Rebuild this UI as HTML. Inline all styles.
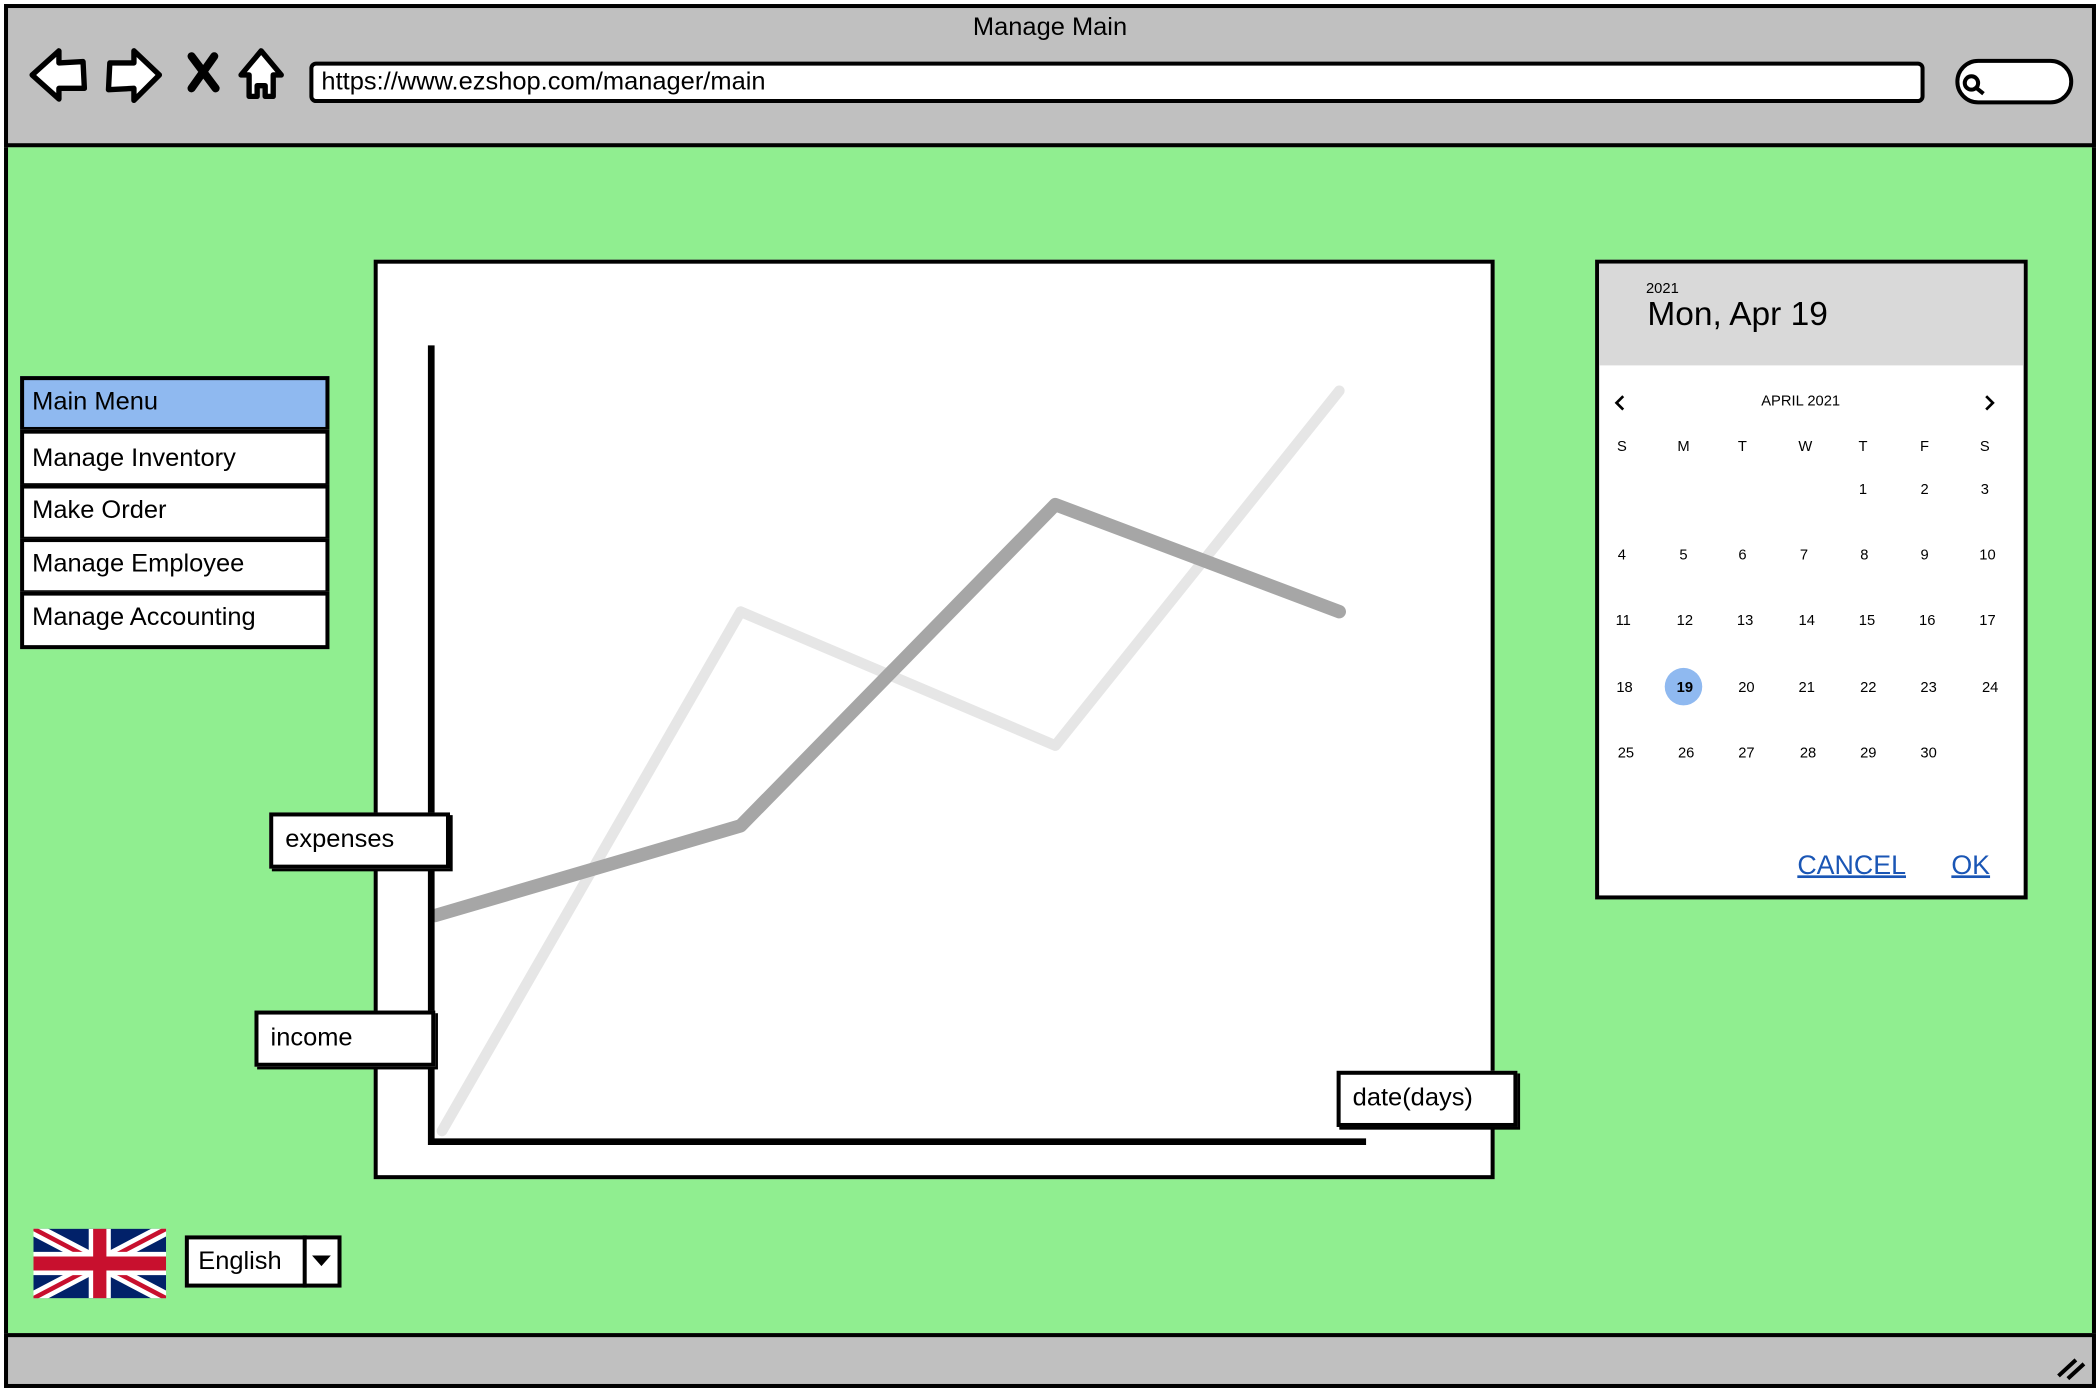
<!DOCTYPE html>
<html><head><style>
html,body{margin:0;padding:0;background:#fff;overflow:hidden}
body{width:2100px;height:1392px;position:relative}
#s{position:absolute;left:0;top:0;width:1568px;height:1040px;transform-origin:0 0;transform:scale(1.33929,1.33846);font-family:"Liberation Sans",sans-serif;color:#000}
.a{position:absolute;box-sizing:border-box}
.box{background:#fff;border:3px solid #000}
.mi{position:absolute;left:15px;width:231px;box-sizing:border-box;border:3px solid #000;background:#fff;font-size:19px;padding-left:6px;line-height:34px}
.lbl{position:absolute;box-sizing:border-box;border:3px solid #000;background:#fff;font-size:19px;padding-left:9px;line-height:35px;box-shadow:2px 2px 0 #000}
.cal span{position:absolute;font-size:11px;transform:translateX(-50%)}
</style></head><body><div id="s">
<div class="a" style="left:3px;top:3px;width:1562px;height:1034px;border:3px solid #000;background:#90ee90"></div>
<div class="a" style="left:3px;top:3px;width:1562px;height:107px;border:3px solid #000;background:#c0c0c0"></div>
<div class="a" style="left:3px;top:996px;width:1562px;height:41px;border:3px solid #000;background:#c0c0c0"></div>
<div class="a" style="left:0;top:10px;width:1568px;text-align:center;font-size:19px">Manage Main</div>
<svg class="a" style="left:0;top:0" width="260" height="110">
<path d="M24 56 L44 38 L44 47 L62 46 L63 66 L44 66 L44 74 Z" fill="#fff" stroke="#000" stroke-width="4" stroke-linejoin="round"/>
<path d="M119 56 L100 38 L100 47 L82 47 L81 67 L100 66 L100 75 Z" fill="#fff" stroke="#000" stroke-width="4" stroke-linejoin="round"/>
<path d="M143 42 L161 66 M160 42 L143 66" stroke="#000" stroke-width="6" stroke-linecap="round"/>
<path d="M195 38 L180 56 L186 56 L186 72 L192 72 L192 64 L198 64 L198 72 L204 72 L204 56 L210 56 Z" fill="#fff" stroke="#000" stroke-width="4" stroke-linejoin="round"/>
</svg>
<div class="a box" style="left:231px;top:46px;width:1206px;height:31px;border-radius:5px;font-size:19px;padding-left:6px;line-height:25px">https://www.ezshop.com/manager/main</div>
<div class="a box" style="left:1460px;top:44px;width:88px;height:34px;border-radius:17px"></div>
<svg class="a" style="left:1462px;top:52px" width="24" height="24"><circle cx="10" cy="10" r="5" fill="none" stroke="#000" stroke-width="3"/><path d="M14 14 L19 18" stroke="#000" stroke-width="3"/></svg>
<svg class="a" style="left:1532px;top:1008px" width="30" height="25"><path d="M5 20 L18 8 M12 22 L24 11" stroke="#000" stroke-width="3"/></svg>

<div class="a box" style="left:279px;top:194px;width:837px;height:687px"></div>
<svg class="a" style="left:0;top:0" width="1568" height="1040">
<polyline points="330,845 553,457 788,557 1000,292" fill="none" stroke="#e6e6e6" stroke-width="8" stroke-linecap="round" stroke-linejoin="round"/>
<polyline points="325,684 553,617 788,377 1000,457" fill="none" stroke="#a6a6a6" stroke-width="10" stroke-linecap="round" stroke-linejoin="round"/>
<path d="M322 258 L322 853 L1020 853" fill="none" stroke="#000" stroke-width="5"/>
</svg>
<div class="lbl" style="left:201px;top:607px;width:135px;height:42px">expenses</div>
<div class="lbl" style="left:190px;top:755px;width:135px;height:42px">income</div>
<div class="lbl" style="left:998px;top:800px;width:135px;height:42px">date(days)</div>

<div class="mi" style="top:281px;height:41px;background:#8fb9f0">Main Menu</div>
<div class="mi" style="top:321px;height:43px;line-height:38px">Manage Inventory</div>
<div class="mi" style="top:362px;height:42px">Make Order</div>
<div class="mi" style="top:402px;height:42px">Manage Employee</div>
<div class="mi" style="top:442px;height:43px">Manage Accounting</div>

<div class="a box cal" style="left:1191px;top:194px;width:323px;height:478px">
<div class="a" style="left:0;top:0;width:317px;height:76px;background:#d9d9d9"></div>
<div class="a" style="left:35px;top:13px;font-size:11px">2021</div>
<div class="a" style="left:36px;top:24px;font-size:25px">Mon, Apr 19</div>
<div class="a" style="left:-8px;top:97px;width:317px;text-align:center;font-size:11px">APRIL 2021</div>
<svg class="a" style="left:10px;top:97px" width="12" height="14"><path d="M8 2 L3 7 L8 12" fill="none" stroke="#000" stroke-width="2"/></svg>
<svg class="a" style="left:285px;top:97px" width="12" height="14"><path d="M4 2 L9 7 L4 12" fill="none" stroke="#000" stroke-width="2"/></svg>
<div class="a" style="left:49px;top:302px;width:28px;height:28px;border-radius:14px;background:#8fb9f0"></div>
<span style="left:17px;top:131px">S</span><span style="left:63px;top:131px">M</span><span style="left:107px;top:131px">T</span><span style="left:154px;top:131px">W</span><span style="left:197px;top:131px">T</span><span style="left:243px;top:131px">F</span><span style="left:288px;top:131px">S</span>
<span style="left:197px;top:163px">1</span><span style="left:243px;top:163px">2</span><span style="left:288px;top:163px">3</span>
<span style="left:17px;top:212px">4</span><span style="left:63px;top:212px">5</span><span style="left:107px;top:212px">6</span><span style="left:153px;top:212px">7</span><span style="left:198px;top:212px">8</span><span style="left:243px;top:212px">9</span><span style="left:290px;top:212px">10</span>
<span style="left:18px;top:261px">11</span><span style="left:64px;top:261px">12</span><span style="left:109px;top:261px">13</span><span style="left:155px;top:261px">14</span><span style="left:200px;top:261px">15</span><span style="left:245px;top:261px">16</span><span style="left:290px;top:261px">17</span>
<span style="left:19px;top:311px">18</span><span style="left:64px;top:311px;font-weight:bold">19</span><span style="left:110px;top:311px">20</span><span style="left:155px;top:311px">21</span><span style="left:201px;top:311px">22</span><span style="left:246px;top:311px">23</span><span style="left:292px;top:311px">24</span>
<span style="left:20px;top:360px">25</span><span style="left:65px;top:360px">26</span><span style="left:110px;top:360px">27</span><span style="left:156px;top:360px">28</span><span style="left:201px;top:360px">29</span><span style="left:246px;top:360px">30</span>
<div class="a" style="left:148px;top:439px;font-size:20px;color:#1a56b5;text-decoration:underline">CANCEL</div>
<div class="a" style="left:263px;top:439px;font-size:20px;color:#1a56b5;text-decoration:underline">OK</div>
</div>

<svg class="a" style="left:25px;top:918px" width="99" height="52" viewBox="0 0 60 30" preserveAspectRatio="none">
<rect width="60" height="30" fill="#012169"/>
<path d="M0 0 L60 30 M60 0 L0 30" stroke="#fff" stroke-width="6"/>
<path d="M0 0 L60 30 M60 0 L0 30" stroke="#c8102e" stroke-width="2"/>
<path d="M30 0 V30 M0 15 H60" stroke="#fff" stroke-width="10"/>
<path d="M30 0 V30 M0 15 H60" stroke="#c8102e" stroke-width="6"/>
</svg>
<div class="a box" style="left:138px;top:923px;width:117px;height:39px;font-size:19px;padding-left:7px;line-height:33px">English</div>
<div class="a" style="left:226px;top:923px;width:3px;height:39px;background:#000"></div>
<svg class="a" style="left:232px;top:936px" width="16" height="12"><path d="M1 2 L15 2 L8 10 Z" fill="#000"/></svg>
</div></body></html>
